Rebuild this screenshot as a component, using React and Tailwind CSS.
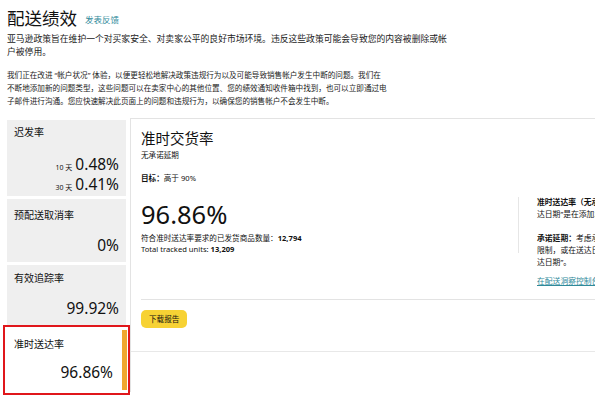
export default function App() {
  const font = { fontFamily: '"Noto Sans", "Noto Sans CJK SC", sans-serif' }

  return (
    <div style={font} className="w-[595px] h-[397px] overflow-hidden bg-white text-[#111]">
      {/* Header */}
      <div className="pl-[7px] pt-[4px]">
        <div className="flex items-end gap-[8px] h-[26px]">
          <h1 className="text-[17.5px] leading-[24px] text-[#111]">配送绩效</h1>
          <a className="text-[8.5px] leading-[18px] text-[#2f8a9a] mb-[1px]">发表反馈</a>
        </div>
        <div className="mt-[3px] text-[8.8px] leading-[12.5px] text-[#222]">
          <span className="block whitespace-nowrap">亚马逊政策旨在维护一个对买家安全、对卖家公平的良好市场环境。违反这些政策可能会导致您的内容被删除或帐</span>
          <span className="block whitespace-nowrap">户被停用。</span>
        </div>
        <div className="mt-[11px] text-[7.6px] leading-[13px] text-[#222]">
          <span className="block whitespace-nowrap">我们正在改进 “帐户状况” 体验，以便更轻松地解决政策违规行为以及可能导致销售帐户发生中断的问题。我们在</span>
          <span className="block whitespace-nowrap">不断地添加新的问题类型，这些问题可以在卖家中心的其他位置、您的绩效通知收件箱中找到，也可以立即通过电</span>
          <span className="block whitespace-nowrap">子邮件进行沟通。您应快速解决此页面上的问题和违规行为，以确保您的销售帐户不会发生中断。</span>
        </div>
      </div>

      {/* Panel */}
      <div className="mt-[10px] flex">
        {/* Left metrics */}
        <div className="w-[130px] shrink-0 pl-[7px] pr-[4px] pt-[2px] flex flex-col gap-[3px]">
          <div className="h-[76px] bg-[#efefef] px-[7px] pt-[5px]">
            <p className="text-[10px] leading-[14px]">迟发率</p>
            <div className="mt-[16px] flex items-baseline justify-end gap-[3px] h-[19px]">
              <span className="text-[7px] leading-[10px]">10 天</span>
              <span className="text-[15.5px] leading-[18px]">0.48%</span>
            </div>
            <div className="mt-[1px] flex items-baseline justify-end gap-[3px] h-[19px]">
              <span className="text-[7px] leading-[10px]">30 天</span>
              <span className="text-[15.5px] leading-[18px]">0.41%</span>
            </div>
          </div>
          <div className="h-[63px] bg-[#efefef] px-[7px] pt-[9px]">
            <p className="text-[10px] leading-[14px]">预配送取消率</p>
            <p className="mt-[14px] text-right text-[15.5px] leading-[19px]">0%</p>
          </div>
          <div className="h-[60px] bg-[#efefef] px-[7px] pt-[6px]">
            <p className="text-[10px] leading-[14px]">有效追踪率</p>
            <p className="mt-[14px] text-right text-[15.5px] leading-[19px]">99.92%</p>
          </div>
          <div className="relative h-[64px] bg-white flex">
            <div className="flex-1 px-[7px] pt-[9px]">
              <p className="text-[10px] leading-[14px]">准时送达率</p>
              <p className="mt-[12px] pr-[2px] text-right text-[15.5px] leading-[19px]">96.86%</p>
            </div>
            <div className="w-[5px] bg-[#f0a830] my-[2px] mr-[-1px]" />
            <div className="absolute -left-[4px] -right-[4px] -top-[3px] -bottom-[3px] border-[2.5px] border-[#e0161b]" />
          </div>
        </div>

        {/* Main detail */}
        <div className="flex-1 border-t border-l border-[#e3e3e3]">
          <div className="flex h-[180px]">
            <div className="w-[388px] shrink-0 pl-[10px] pt-[9px] flex">
              <div className="flex-1">
                <h2 className="text-[14.5px] leading-[20px]">准时交货率</h2>
                <p className="text-[7.6px] leading-[12px] mt-[1px]">无承诺延期</p>
                <p className="text-[7.6px] leading-[12px] mt-[11px]"><b>目标：</b>高于 90%</p>
                <p className="text-[25.5px] leading-[32px] mt-[14px]">96.86%</p>
                <p className="text-[7.6px] leading-[11px] mt-[3px]">符合准时送达率要求的已发货商品数量：<b>12,794</b></p>
                <p className="text-[7.6px] leading-[11px]">Total tracked units: <b>13,209</b></p>
              </div>
              <div className="w-px bg-[#e6e6e6] mt-[69px] h-[56px]" />
            </div>
            <div className="pl-[18px] pt-[77px] text-[7.8px] leading-[12px] whitespace-nowrap">
              <p className="font-bold">准时送达率（无承诺延期）</p>
              <p>达日期”是在添加承诺延期</p>
              <p className="mt-[12px]"><b>承诺延期：</b>考虑承诺延期</p>
              <p>限制，或在送达日期</p>
              <p>达日期”。</p>
              <p className="mt-[7px] text-[#2f8a9a] underline">在配送洞察控制台中查看</p>
            </div>
          </div>
          <div className="ml-[10px] border-t-[1.5px] border-[#e3e3e3] pt-[10px] h-[52px]">
            <button className="block bg-[#f7d234] rounded-[5px] px-[8px] h-[18px] text-[7.6px] leading-[18px]">下载报告</button>
          </div>
          <div className="border-t border-[#e8e8e8]" />
        </div>
      </div>
    </div>
  )
}
